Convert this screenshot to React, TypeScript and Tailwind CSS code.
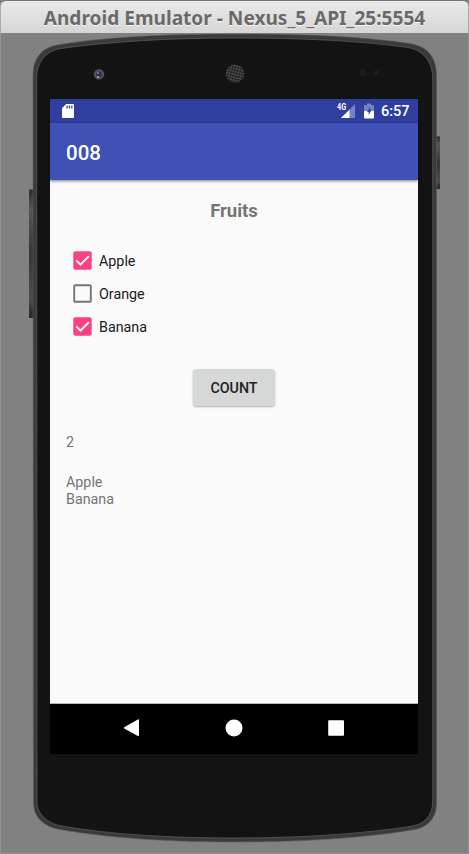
import { useState } from "react";

const OUTER =
  "M33 76 C33 56 44 46.5 60 44.5 C110 36.5 170 34 235 34 C300 34 358 36 410 43.5 C427 46.5 436.5 56 436.5 76 L436.5 803 C436.5 819 427 828 412 830 C360 838.5 300 842 235 842 C170 842 108 838 60 829.5 C45 827 33.5 818 33.5 803 Z";
const INNER =
  "M36.7 78 C36.7 62 46 51 60 48.7 C110 41.5 170 38 235 38 C300 38 358 40.5 408 47.5 C423 50 432.7 62 432.7 78 L432.7 802 C432.7 815 424 825 410 826.5 C360 834 300 838 235 838 C170 838 110 834.5 62 826 C48 824 37 814 37 802 Z";

function Shell() {
  return (
    <svg className="absolute inset-0" width="469" height="854" viewBox="0 0 469 854" fill="none">
      <defs>
        <linearGradient id="key" x1="0" y1="0" x2="0" y2="1">
          <stop offset="0" stopColor="#2b2c2d" />
          <stop offset="0.15" stopColor="#555657" />
          <stop offset="0.5" stopColor="#343638" />
          <stop offset="0.85" stopColor="#4b4c4d" />
          <stop offset="1" stopColor="#242424" />
        </linearGradient>
        <radialGradient id="lens">
          <stop offset="0" stopColor="#2a2c80" />
          <stop offset="0.4" stopColor="#2b2d50" />
          <stop offset="0.65" stopColor="#555" />
          <stop offset="1" stopColor="#4a4a4a" />
        </radialGradient>
        <pattern id="mesh" width="2.8" height="2.8" patternUnits="userSpaceOnUse" patternTransform="rotate(15)">
          <rect width="2.8" height="2.8" fill="#606060" />
          <circle cx="1.4" cy="1.4" r="1.15" fill="#121212" />
        </pattern>
      </defs>
      <rect x="29" y="189.500" width="5" height="128.500" fill="url(#key)" />
      <rect x="436" y="136.500" width="4" height="52.500" fill="url(#key)" />
      <path d={OUTER} fill="#3a3a3b" stroke="#5a5b5c" strokeWidth="0.6" />
      <path d={INNER} fill="#131313" stroke="#58595a" strokeWidth="0.8" />
      <circle cx="99" cy="74.300" r="5.300" fill="url(#lens)" />
      <circle cx="98" cy="73" r="0.900" fill="#8589c8" />
      <circle cx="98" cy="77.200" r="1.100" fill="#a8a8a8" />
      <circle cx="235" cy="73.500" r="9.300" fill="url(#mesh)" />
      <circle cx="363" cy="72.700" r="4" fill="#1b1b1b" />
      <circle cx="376.300" cy="72.700" r="2.500" fill="#1e1e1e" />
    </svg>
  );
}

function StatusBar() {
  return (
    <div className="flex h-6 bg-[#303f9f] pl-3 pr-[9px]">
      <svg className="mt-[5px]" width="12" height="15" viewBox="0 0 12 15">
        <path
          fill="#fff"
          fillRule="evenodd"
          d="M4.200 0H11Q12 0 12 1V13Q12 14 11 14H1Q0 14 0 13V4.200ZM4.400 1.500V4.500H5.700V1.500ZM6.800 1.500V4.500H8.100V1.500ZM9.200 1.500V4.500H10.500V1.500Z"
        />
      </svg>
      <div className="relative ml-auto h-6 w-[18px]">
        <svg className="absolute left-0 top-[5px]" width="18" height="15" viewBox="0 0 18 15">
          <path d="M18 0V14H4L10.500 7.500Z" fill="#7881bf" />
          <path d="M12.500 5.800V14H4Z" fill="#fff" />
        </svg>
        <span className="absolute left-0 top-[4px] origin-left scale-x-[0.8] text-[9px] font-bold leading-[9px] text-white">4G</span>
      </div>
      <svg className="ml-[9px] mt-1" width="10" height="16" viewBox="0 0 10 16">
        <path d="M3 0.500H7V2H9Q10 2 10 3V8H0V3Q0 2 1 2H3Z" fill="#7881bf" />
        <path d="M0 8H10V14.500Q10 15.500 9 15.500H1Q0 15.500 0 14.500Z" fill="#fff" />
        <path d="M6.200 4L3 9H4.700V12L7.300 7.800H6.200Z" fill="#303f9f" />
      </svg>
      <span className="ml-[7px] w-7 whitespace-nowrap text-[14.500px] font-medium leading-[26px] text-white">6:57</span>
    </div>
  );
}

function FruitCheckbox({ label, initial }: { label: string; initial: boolean }) {
  const [checked, setChecked] = useState(initial);
  return (
    <button
      role="checkbox"
      aria-checked={checked}
      onClick={() => setChecked(!checked)}
      className="flex h-[33px] items-center gap-[7px] text-[14.300px] text-[#202020]"
    >
      <svg width="19" height="19" viewBox="0 0 19 19" fill="none">
        {checked ? (
          <>
            <rect x="0.300" y="0.300" width="18.400" height="18.400" rx="2" fill="#ff4081" />
            <path d="M3.200 9.400L7.500 13.700L15.900 5.100" stroke="#fff" strokeWidth="2" />
          </>
        ) : (
          <rect x="1.200" y="1.200" width="16.600" height="16.600" rx="1" stroke="#757575" strokeWidth="1.900" />
        )}
      </svg>
      <span className="pt-[2px]">{label}</span>
    </button>
  );
}

function NavigationBar() {
  return (
    <div className="flex h-[50px] items-center justify-center gap-[84px] bg-black pb-[2px] pr-[1px]">
      <svg width="18" height="18" viewBox="0 0 18 18" fill="#fff">
        <path d="M1.200 8.200L14.800 0.400Q16 0 16 1V16Q16 17.600 14.800 17L1.200 9.500Q0.300 8.800 1.200 8.200Z" />
      </svg>
      <svg width="18" height="18" viewBox="0 0 18 18" fill="#fff">
        <circle cx="9" cy="9" r="8.500" />
      </svg>
      <svg width="18" height="18" viewBox="0 0 18 18" fill="#fff">
        <rect x="1.200" y="1.200" width="15.800" height="15.600" rx="0.800" />
      </svg>
    </div>
  );
}

export default function App() {
  return (
    <div className="relative h-[854px] w-[469px] overflow-hidden bg-[#818181] font-['Roboto',sans-serif]">
      <Shell />
      <header className="relative h-[33px] overflow-hidden whitespace-nowrap rounded-t-md border border-b-0 border-t-[#777] border-x-[#aaa] bg-gradient-to-b from-[#eaeaea] to-[#d6d6d6] text-center font-['Noto_Sans',sans-serif] text-[19.100px] font-bold leading-[35px] text-[#696969] [text-shadow:0_1px_0_#f5f5f5]">
        Android Emulator - Nexus_5_API_25:5554
      </header>
      <main className="relative ml-[50px] mt-[66px] flex h-[655px] w-[368px] flex-col bg-[#fafafa]">
        <StatusBar />
        <div className="flex h-[57px] items-center bg-[#3f51b5] pl-4 pt-[3px] text-[20.500px] font-medium text-white shadow-[0_1px_3px_rgba(0,0,0,0.5)]">
          008
        </div>
        <section className="flex flex-1 flex-col border-b border-[#b8b8b8] px-4 text-[14.300px] text-[#757575]">
          <h1 className="mt-[18px] text-center text-[18.500px] font-bold leading-[26px]">Fruits</h1>
          <div className="ml-[7px] mt-[20px] flex flex-col items-start">
            <FruitCheckbox label="Apple" initial={true} />
            <FruitCheckbox label="Orange" initial={false} />
            <FruitCheckbox label="Banana" initial={true} />
          </div>
          <button className="mt-[26px] h-[37px] w-[82px] self-center rounded-sm bg-[#d6d7d7] pt-[2px] text-[14.300px] font-medium text-[#212121] shadow-[0_1px_2px_rgba(0,0,0,0.3)]">
            COUNT
          </button>
          <p className="mt-7 leading-[17px]">2</p>
          <p className="mt-[23px] leading-[17px]">
            Apple
            <br />
            Banana
          </p>
        </section>
        <NavigationBar />
      </main>
      <div className="pointer-events-none absolute inset-x-0 bottom-0 top-[33px] border border-t-0 border-[#939393]" />
    </div>
  );
}
